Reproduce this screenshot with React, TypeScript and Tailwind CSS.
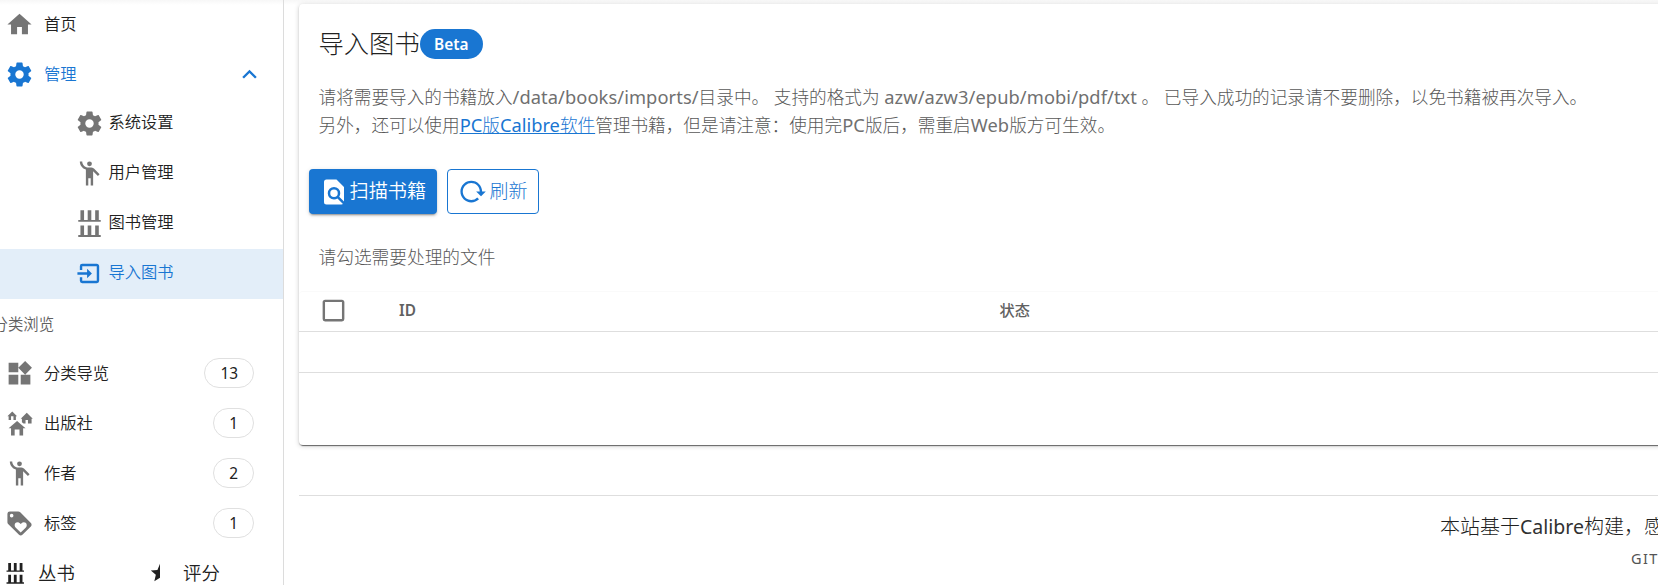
import React from "react";

const paths = {
  home: "M10,20V14H14V20H19V12H22L12,3L2,12H5V20H10Z",
  cog: "M12,15.5A3.5,3.5 0 0,1 8.5,12A3.5,3.5 0 0,1 12,8.5A3.5,3.5 0 0,1 15.5,12A3.5,3.5 0 0,1 12,15.5M19.43,12.97C19.47,12.65 19.5,12.33 19.5,12C19.5,11.67 19.47,11.34 19.43,11L21.54,9.37C21.73,9.22 21.78,8.95 21.66,8.73L19.66,5.27C19.54,5.05 19.27,4.96 19.05,5.05L16.56,6.05C16.04,5.66 15.5,5.32 14.87,5.07L14.5,2.42C14.46,2.18 14.25,2 14,2H10C9.75,2 9.54,2.18 9.5,2.42L9.13,5.07C8.5,5.32 7.96,5.66 7.44,6.05L4.95,5.05C4.73,4.96 4.46,5.05 4.34,5.27L2.34,8.73C2.21,8.95 2.27,9.22 2.46,9.37L4.57,11C4.53,11.34 4.5,11.67 4.5,12C4.5,12.33 4.53,12.65 4.57,12.97L2.46,14.63C2.27,14.78 2.21,15.05 2.34,15.27L4.34,18.73C4.46,18.95 4.73,19.03 4.95,18.95L7.44,17.94C7.96,18.34 8.5,18.68 9.13,18.93L9.5,21.58C9.54,21.82 9.75,22 10,22H14C14.25,22 14.46,21.82 14.5,21.58L14.87,18.93C15.5,18.67 16.04,18.34 16.56,17.94L19.05,18.95C19.27,19.03 19.54,18.95 19.66,18.73L21.66,15.27C21.78,15.05 21.73,14.78 21.54,14.63L19.43,12.97Z",
  person: "M12,2A2,2 0 1,1 12,6A2,2 0 1,1 12,2M15.89,8.11C15.5,7.72 14.83,7 13.53,7H10.99C8.24,6.99 6,4.75 6,2H4C4,5.16 6.11,7.84 9,8.71V22H11V16H13V22H15V10.05L18.95,14L20.36,12.59L15.89,8.11Z",
  shelf: "M2.7,9H4.5V1H7.5V9H10.5V1H13.5V9H16.7V1H19.7V9H21.3V10.5H2.7ZM2.7,21.6H4.5V13.7H7.5V21.6H10.5V13.7H13.5V21.6H16.7V13.7H19.7V21.6H21.3V23.1H2.7Z",
  enter: "M14,12L10,8V11H2V13H10V16M20,18V6C20,4.89 19.1,4 18,4H6A2,2 0 0,0 4,6V9H6V6H18V18H6V15H4V18A2,2 0 0,0 6,20H18A2,2 0 0,0 20,18Z",
  widgets: "M16.66,1.69L22.31,7.34L16.66,13H21V21H13V13H16.66L11,7.34V11H3V3H11V7.34ZM3,13H11V21H3Z",
  houses: "M17,16H15V22H12V17H8V22H5V16H3L10,10L17,16M6,2L10,6H9V9H7V6H5V9H3V6H2L6,2M18,3L23,8H22V12H19V9H17V12H15.34L14,10.87V8H13L18,3Z",
  tag: "M21.41,11.58L12.41,2.58C12.04,2.21 11.53,2 11,2H4A2,2 0 0,0 2,4V11C2,11.53 2.21,12.04 2.59,12.41L11.59,21.41C11.96,21.78 12.47,22 13,22C13.53,22 14.04,21.79 14.41,21.41L21.41,14.41C21.79,14.04 22,13.53 22,13C22,12.47 21.79,11.96 21.41,11.58M5.5,7A1.5,1.5 0 1,1 7,5.5A1.5,1.5 0 0,1 5.5,7M17.27,15.27L13,19.54L8.73,15.27C8.28,14.81 8,14.19 8,13.5A2.5,2.5 0 0,1 10.5,11C11.19,11 11.82,11.28 12.27,11.74L13,12.46L13.73,11.73C14.18,11.28 14.81,11 15.5,11A2.5,2.5 0 0,1 18,13.5C18,14.19 17.72,14.82 17.27,15.27Z",
  chevron: "M7.41,15.41L12,10.83L16.59,15.41L18,14L12,8L6,14L7.41,15.41Z",
  find: "M9,13A3,3 0 0,0 12,16A3,3 0 0,0 15,13A3,3 0 0,0 12,10A3,3 0 0,0 9,13M20,19.59V8L14,2H6A2,2 0 0,0 4,4V20A2,2 0 0,0 6,22H18C18.45,22 18.85,21.85 19.19,21.6L14.76,17.17C13.96,17.69 13,18 12,18A5,5 0 0,1 7,13A5,5 0 0,1 12,8A5,5 0 0,1 17,13C17,14 16.69,14.96 16.17,15.75L20,19.59Z",
  reload: "M2,12C2,16.97 6.03,21 11,21C13.39,21 15.68,20.06 17.4,18.4L15.9,16.9C14.63,18.25 12.86,19 11,19C4.76,19 1.64,11.46 6.05,7.05C10.46,2.64 18,5.77 18,12H15L19,16H19.1L23,12H20C20,7.03 15.97,3 11,3C6.03,3 2,7.03 2,12Z",
  halfStar: "M12,2V17.27L5.82,21L7.45,13.97L2,9.24L9.19,8.62Z",
  box: "M19,3H5C3.89,3 3,3.89 3,5V19A2,2 0 0,0 5,21H19A2,2 0 0,0 21,19V5C21,3.89 20.1,3 19,3M19,5V19H5V5H19Z",
};

function Icon({ name, className = "size-[29px]" }: { name: keyof typeof paths; className?: string }) {
  return (
    <svg viewBox="0 0 24 24" fill="currentColor" className={`shrink-0 overflow-visible ${className}`}>
      <path d={paths[name]} />
    </svg>
  );
}

function Latin({ children }: { children: string }) {
  return <span className="text-[18.3px] font-normal tracking-[0.08px] text-[#707070]">{children}</span>;
}

function NavItem({ icon, label, count }: { icon: keyof typeof paths; label: string; count?: number }) {
  return (
    <div className="flex h-[50px] items-center pl-[4.5px] pr-[29px]">
      <span className="flex text-[#757575]">
        <Icon name={icon} />
      </span>
      <span className="ml-[10.5px] flex-1 text-[16.3px]">{label}</span>
      {count !== undefined && (
        <span className="flex h-[30px] items-center rounded-full border border-[#e0e0e0] px-[15px] pt-[2px] text-[15.4px] font-normal">
          {count}
        </span>
      )}
    </div>
  );
}

function SubItem({ icon, label, active = false }: { icon: keyof typeof paths; label: string; active?: boolean }) {
  return (
    <div className={`flex h-[50px] items-center pl-[74.5px] ${active ? "bg-[#e3eef9] text-[#1976d2]" : ""}`}>
      <span className={active ? "flex pb-[1px] text-[#1976d2]" : "flex pb-[1px] text-[#757575]"}>
        <Icon name={icon} />
      </span>
      <span className="ml-[5px] pb-[3px] text-[16.3px]">{label}</span>
    </div>
  );
}

function Sidebar() {
  return (
    <aside className="h-full w-[284px] shrink-0 overflow-hidden border-r border-[#dcdcdc] font-[350]">
      <div className="-mt-px flex flex-col">
        <NavItem icon="home" label="首页" />
        <div className="flex h-[50px] items-center pl-[4.5px] pr-[19px] text-[#1976d2]">
          <Icon name="cog" />
          <span className="ml-[10.5px] flex-1 text-[16.3px]">管理</span>
          <Icon name="chevron" />
        </div>
        <SubItem icon="cog" label="系统设置" />
        <SubItem icon="person" label="用户管理" />
        <SubItem icon="shelf" label="图书管理" />
        <SubItem icon="enter" label="导入图书" active />
        <div className="-ml-[7.5px] flex h-[50px] items-center pt-px text-[15.4px] text-[#606060]">分类浏览</div>
        <div className="-mt-px flex flex-col">
          <NavItem icon="widgets" label="分类导览" count={13} />
          <NavItem icon="houses" label="出版社" count={1} />
          <NavItem icon="person" label="作者" count={2} />
          <NavItem icon="tag" label="标签" count={1} />
        </div>
        <div className="flex h-[50px] items-center text-[18.4px]">
          <div className="flex w-[149px] items-center pl-[4px]">
            <Icon name="shelf" className="size-[22.5px]" />
            <span className="ml-[11.5px]">丛书</span>
          </div>
          <Icon name="halfStar" className="size-[22px]" />
          <span className="ml-[12px]">评分</span>
        </div>
      </div>
    </aside>
  );
}

export default function App() {
  return (
    <div className="flex h-[585px] w-[1658px] overflow-hidden whitespace-nowrap bg-white bg-[linear-gradient(#f7f7f7,#ffffff_5px)] font-['Noto_Sans','Noto_Sans_CJK_SC',sans-serif] text-[#212121]">
      <Sidebar />
      <main className="min-w-0 flex-1 pl-[15px] pt-[4px] font-light">
        <section className="h-[441px] w-[1400px] rounded-[4px] bg-white shadow-[0_3px_1px_-2px_rgba(0,0,0,.4),0_1px_1px_0_rgba(0,0,0,.25),0_1px_5px_0_rgba(0,0,0,.2)]">
          <div className="flex h-[80px] items-center pl-[19.5px] text-[25.3px]">
            <h1 className="font-light">导入图书</h1>
            <span className="flex h-[30px] w-[63px] items-center justify-center rounded-full bg-[#1976d2] pt-px text-[15.4px] font-semibold text-white">
              Beta
            </span>
          </div>
          <div className="-mt-px pl-[19.5px] text-[17.65px] leading-[28px] text-[#585858]">
            <p>
              请将需要导入的书籍放入<Latin>/data/books/imports/</Latin>目录中。 支持的格式为{" "}
              <Latin>azw/azw3/epub/mobi/pdf/txt</Latin> 。 已导入成功的记录请不要删除，以免书籍被再次导入。
            </p>
            <p>
              另外，还可以使用
              <a className="font-light text-[#1976d2] underline" href="#calibre">
                <span className="text-[18.3px] font-normal">PC</span>版
                <span className="text-[18.3px] font-normal">Calibre</span>软件
              </a>
              管理书籍，但是请注意：使用完<Latin>PC</Latin>版后，需重启<Latin>Web</Latin>版方可生效。
            </p>
          </div>
          <div className="mt-[30px] flex gap-[10px] pl-[10px]">
            <button className="flex h-[45px] w-[128px] items-center rounded-[4px] bg-[#1976d2] pl-[10px] text-[19.2px] font-[350] text-white shadow-[0_3px_1px_-2px_rgba(0,0,0,.2),0_2px_2px_0_rgba(0,0,0,.14),0_1px_5px_0_rgba(0,0,0,.12)]">
              <Icon name="find" className="size-[30px]" />
              <span className="ml-[0.5px]">扫描书籍</span>
            </button>
            <button className="flex h-[45px] w-[92px] items-center rounded-[4px] border border-[#1976d2] pl-[10px] text-[19px] font-light text-[#1976d2]">
              <Icon name="reload" />
              <span className="ml-[2.5px]">刷新</span>
            </button>
          </div>
          <p className="mt-[29px] h-[48px] pl-[19.5px] text-[17.7px] leading-[28px] text-[#585858]">
            请勾选需要处理的文件
          </p>
          <div className="rounded-t-[4px] border-t border-[#fafafa]">
            <div className="flex h-[40px] items-center border-b border-[#dedede] pb-[2px] pl-[20px] text-[15.2px] text-[#616161]">
              <Icon name="box" className="size-[29px] text-[#757575]" />
              <span className="ml-[51px] w-[600.5px] text-[15.4px] font-semibold">ID</span>
              <span className="font-medium">状态</span>
            </div>
            <div className="h-[41px] border-b border-[#dedede]" />
          </div>
        </section>
        <footer className="mt-[50px] border-t border-[#dedede] pt-[16px]">
          <p className="pl-[1141px] text-[20px] leading-[30px]">
            本站基于<span className="text-[19.5px] font-normal text-[#303030]">Calibre</span>构建，感
          </p>
          <p className="pl-[1332px] text-[14.5px] font-normal leading-[32px] tracking-[1.4px] text-[#555]">GIT</p>
        </footer>
      </main>
    </div>
  );
}
